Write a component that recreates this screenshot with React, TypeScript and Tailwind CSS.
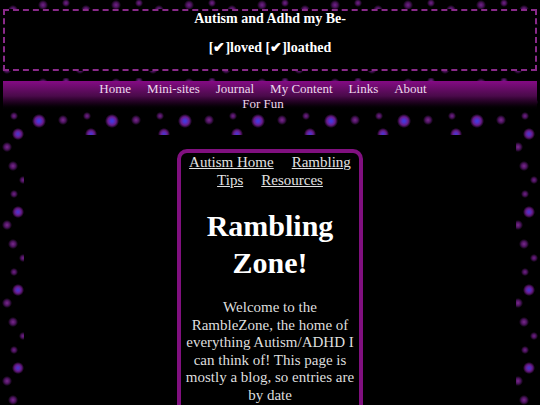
import React from "react";

const navLinks = ["Home", "Mini-sites", "Journal", "My Content", "Links", "About", "For Fun"];

export default function App() {
  return (
    <div className="min-h-screen bg-black bg-[image:radial-gradient(circle_7px_at_39px_43px,#3c3ce8_0%,#5230c4_30%,#6a1a8a_60%,transparent_100%),radial-gradient(circle_5px_at_63px_42px,#7a2a8e_0%,#4e1460_50%,transparent_100%),radial-gradient(circle_4px_at_14px_38px,#70228a_0%,#481258_50%,transparent_100%),radial-gradient(circle_6px_at_18px_56px,#4636d6_0%,#6226a4_40%,#5a1470_65%,transparent_100%),radial-gradient(circle_5px_at_7px_69px,#7a2a8e_0%,#4e1460_50%,transparent_100%),radial-gradient(circle_5px_at_13px_10px,#7a2a8e_0%,#4e1460_50%,transparent_100%),radial-gradient(circle_4px_at_23px_24px,#70228a_0%,#481258_50%,transparent_100%),radial-gradient(circle_5px_at_43px_5px,#70228a_0%,#481258_50%,transparent_100%),radial-gradient(circle_4px_at_66px_3px,#70228a_0%,#481258_50%,transparent_100%)] bg-[length:73px_78px] pt-[9px] font-['Liberation_Serif',serif]">
      <header className="mx-[3px] border-2 border-dashed border-[#8a2a8a] bg-black pb-[13px] text-center text-[14px] font-bold leading-[16px] text-white">
        <p>Autism and Adhd my Be-</p>
        <p className="mt-[13px]">[✔]loved [✔]loathed</p>
      </header>

      <nav className="mx-[3px] mt-[10px] h-[30px] bg-gradient-to-b from-[#850a85] via-[#4a0a4a] to-black">
        <ul className="mx-auto flex max-w-[360px] flex-wrap justify-center text-[13px] leading-[15px] text-[#ecd8ec]">
          {navLinks.map((l) => (
            <li key={l} className="ml-[1px] mr-[15px]">
              {l}
            </li>
          ))}
        </ul>
      </nav>

      <main className="mx-[24px] mt-[24px] min-h-[270px] bg-black pt-[14px]">
        <section className="mx-auto w-[186px] rounded-[10px] border-4 border-[#80107f] px-[3px] pb-4 text-center">
          <div className="text-[15px] leading-[18px] text-[#e2e2e2]">
            <a href="#" className="underline">Autism Home</a>
            <span className="inline-block w-[18px]"></span>
            <a href="#" className="underline">Rambling</a>{" "}
            <a href="#" className="underline">Tips</a>
            <span className="inline-block w-[18px]"></span>
            <a href="#" className="underline">Resources</a>
          </div>
          <h1 className="mt-[18px] text-[30px] font-bold leading-[37px] text-white">Rambling Zone!</h1>
          <p className="mt-[18px] text-[15px] leading-[17.6px] text-[#dedede]">
            Welcome to the RambleZone, the home of everything Autism/ADHD I can think of! This page is mostly a
            blog, so entries are by date
          </p>
        </section>
      </main>
    </div>
  );
}
